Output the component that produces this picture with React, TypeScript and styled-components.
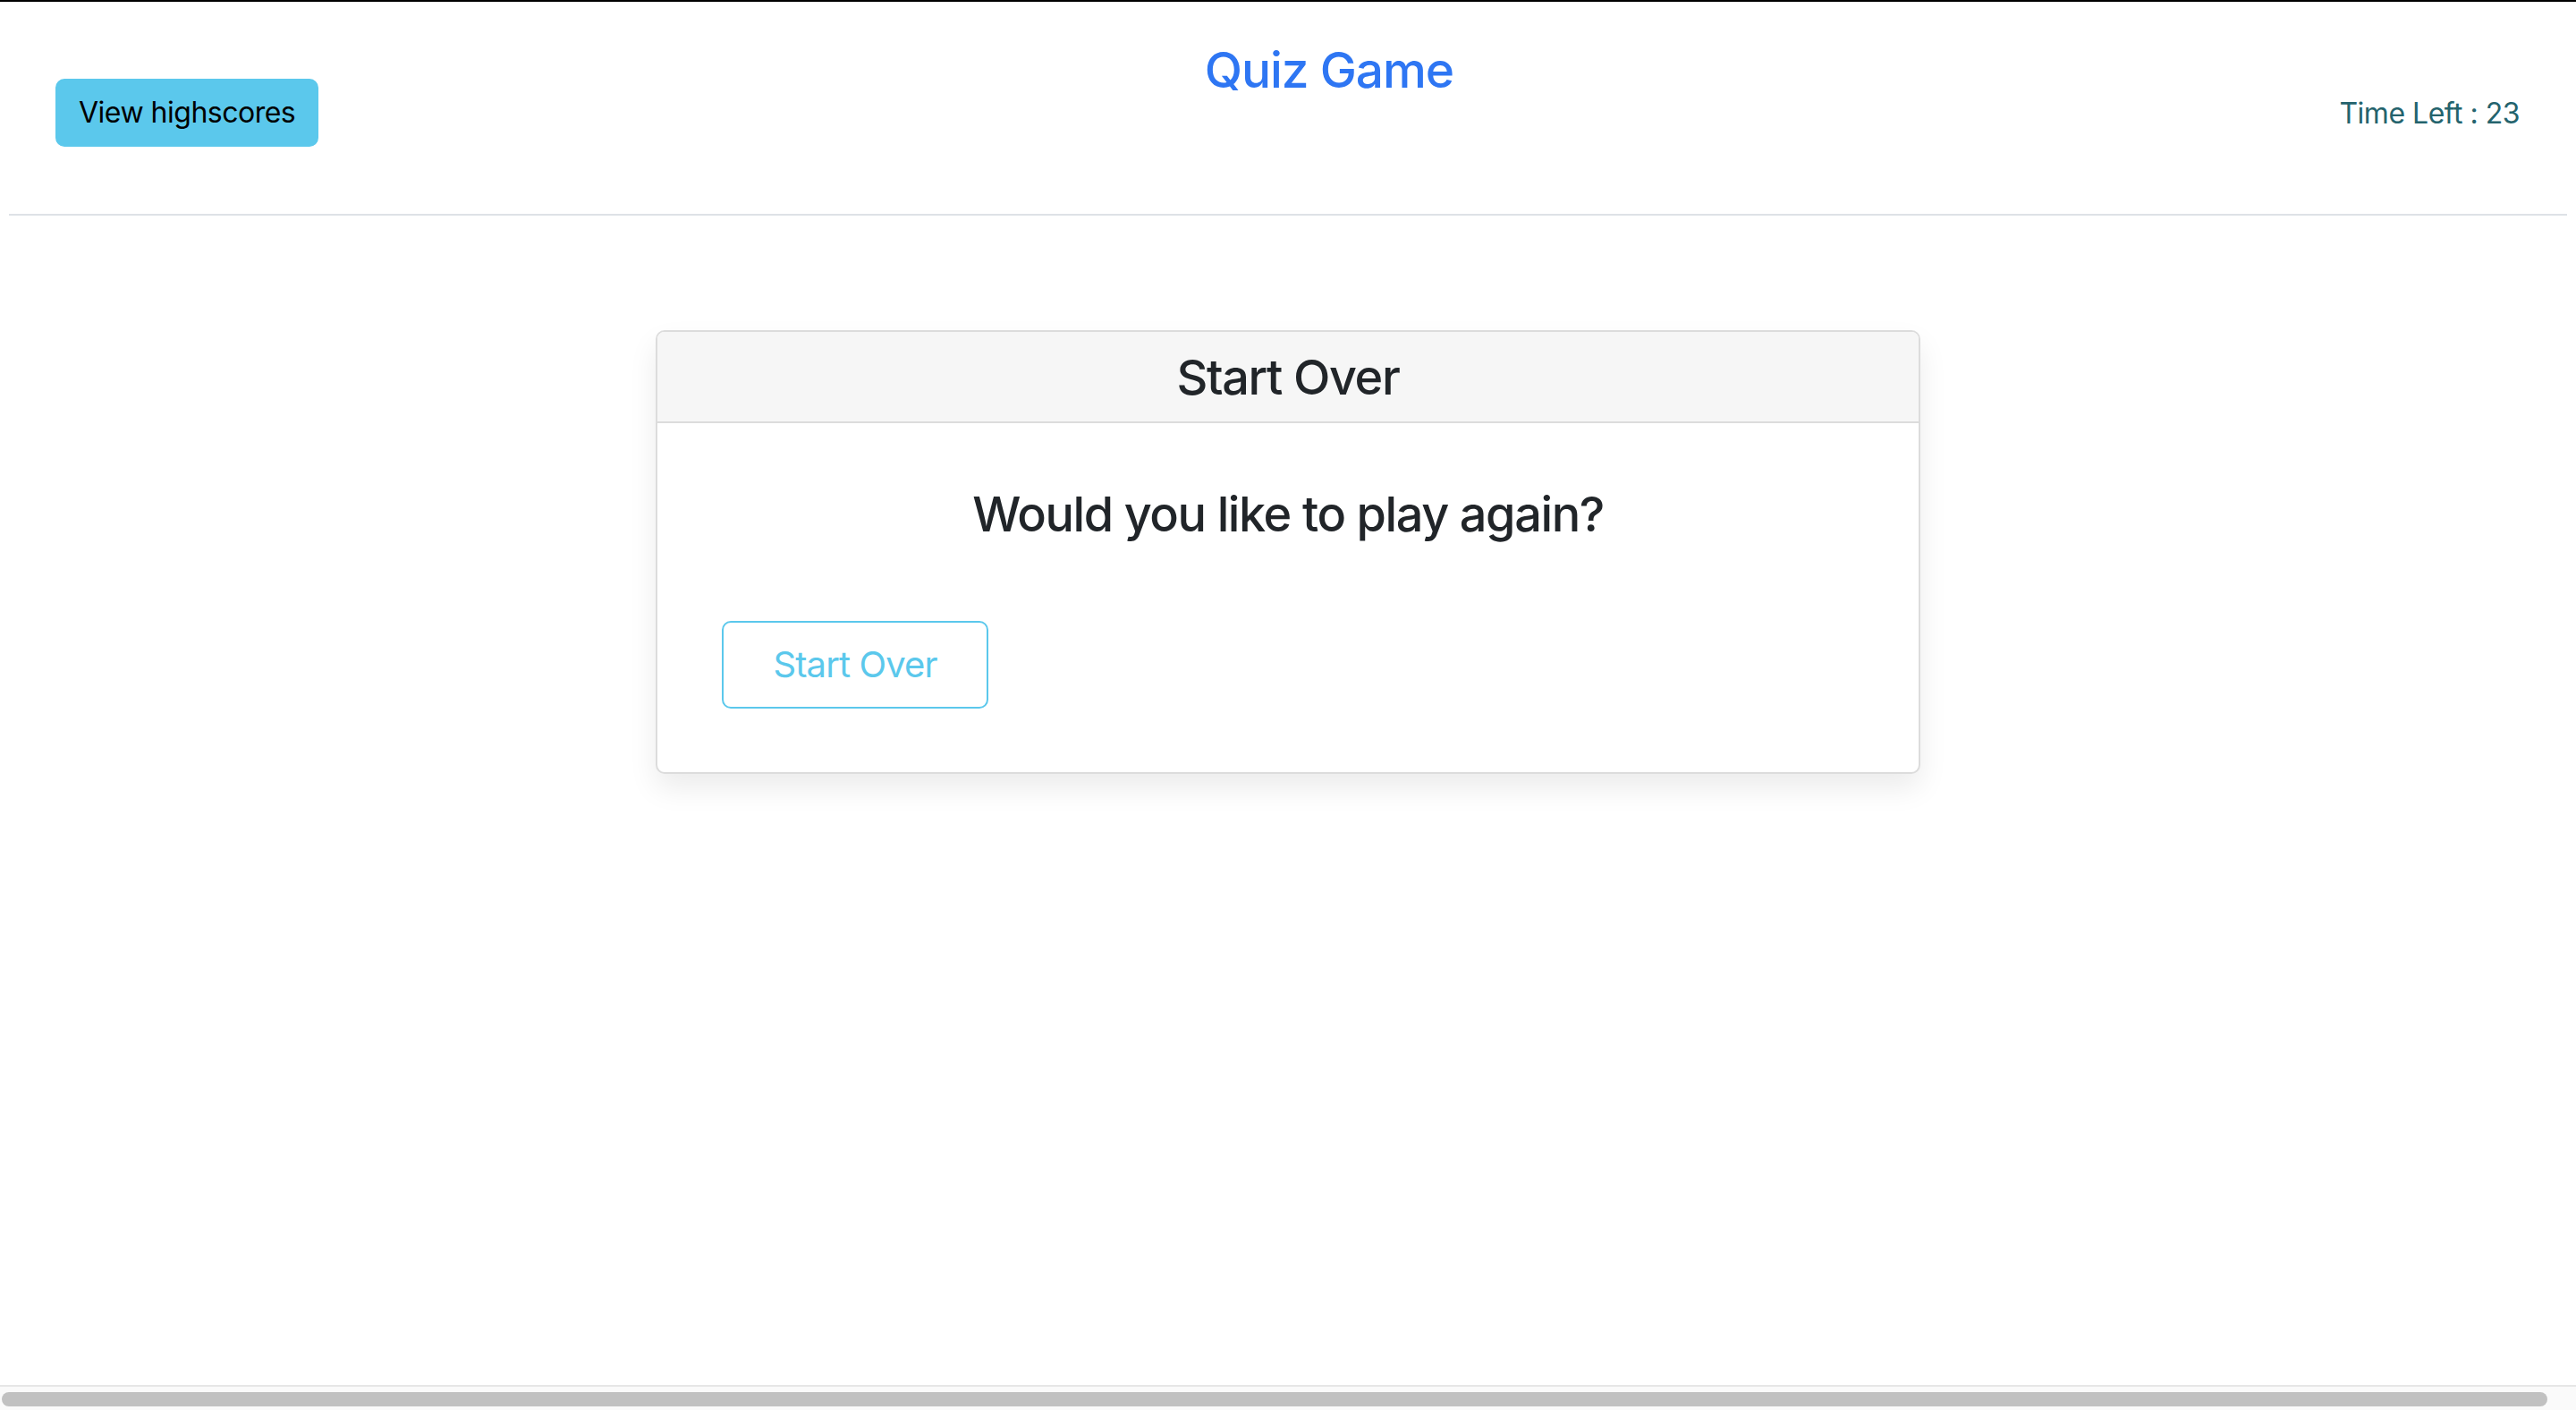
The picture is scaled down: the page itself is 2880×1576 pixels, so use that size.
import styled, { createGlobalStyle } from "styled-components";

const GlobalStyle = createGlobalStyle`
  html, body {
    margin: 0;
    padding: 0;
    background: #ffffff;
  }
  body {
    font-family: Inter, "Noto Sans", "Liberation Sans", sans-serif;
    color: #212529;
    overflow: hidden;
  }
`;

const Page = styled.div`
  min-height: 1574px;
  border-top: 2px solid #000000;
  background: #ffffff;
`;

const Header = styled.header`
  display: flex;
  justify-content: space-between;
  align-items: flex-start;
  height: 195px;
  padding: 42px 63px 0 62px;
`;

const HighscoresButton = styled.button`
  margin-top: 44px;
  padding: 12px 24px;
  border: 2px solid #5bc8ec;
  border-radius: 10px;
  background: #5bc8ec;
  color: #000000;
  font-family: inherit;
  font-size: 32px;
  line-height: 48px;
  letter-spacing: -0.5px;
  cursor: pointer;
`;

const Title = styled.h1`
  margin: 0;
  font-size: 55px;
  font-weight: 500;
  line-height: 68px;
  letter-spacing: -1.1px;
  color: #2e76f3;
`;

const TimeLeft = styled.div`
  margin-top: 59px;
  font-size: 32px;
  line-height: 48px;
  letter-spacing: -0.5px;
  color: #24636d;
`;

const Divider = styled.hr`
  margin: 0 10px;
  border: 0;
  border-top: 2px solid #dee2e6;
`;

const Card = styled.section`
  width: 1414px;
  margin: 128px auto 0;
  box-sizing: border-box;
  border: 2px solid #dcdcdc;
  border-radius: 10px;
  background: #ffffff;
  box-shadow: 0 16px 32px rgba(0, 0, 0, 0.08);
  overflow: hidden;
`;

const CardHeader = styled.div`
  padding: 17px 32px 16px;
  background: #f6f6f6;
  border-bottom: 2px solid #dcdcdc;
  text-align: center;
`;

const Heading = styled.h3`
  margin: 0;
  font-size: 54px;
  font-weight: 500;
  line-height: 67px;
  letter-spacing: -1.4px;
  color: #212529;
`;

const CardBody = styled.div`
  padding: 68px 72px 71px;
`;

const Question = styled(Heading)`
  margin-bottom: 86px;
  text-align: center;
`;

const OutlineButton = styled.button`
  display: block;
  width: 298px;
  height: 98px;
  padding: 0;
  border: 2px solid #5bc8ec;
  border-radius: 10px;
  background: transparent;
  color: #5bc8ec;
  font-family: inherit;
  font-size: 40px;
  line-height: 60px;
  letter-spacing: -0.9px;
  cursor: pointer;
`;

const ScrollTrack = styled.div`
  position: fixed;
  left: 0;
  right: 0;
  bottom: 0;
  height: 28px;
  padding: 6px 0 0 2px;
  box-sizing: border-box;
  background: #fafafa;
  border-top: 2px solid #e6e6e6;
`;

const ScrollThumb = styled.div`
  width: 2846px;
  height: 16px;
  border-radius: 8px;
  background: #c1c1c1;
`;

export default function App() {
  return (
    <>
      <GlobalStyle />
      <Page>
        <Header>
          <HighscoresButton>View highscores</HighscoresButton>
          <Title>Quiz Game</Title>
          <TimeLeft>Time Left : 23</TimeLeft>
        </Header>
        <Divider />
        <Card>
          <CardHeader>
            <Heading>Start Over</Heading>
          </CardHeader>
          <CardBody>
            <Question>Would you like to play again?</Question>
            <OutlineButton>Start Over</OutlineButton>
          </CardBody>
        </Card>
      </Page>
      <ScrollTrack>
        <ScrollThumb />
      </ScrollTrack>
    </>
  );
}
